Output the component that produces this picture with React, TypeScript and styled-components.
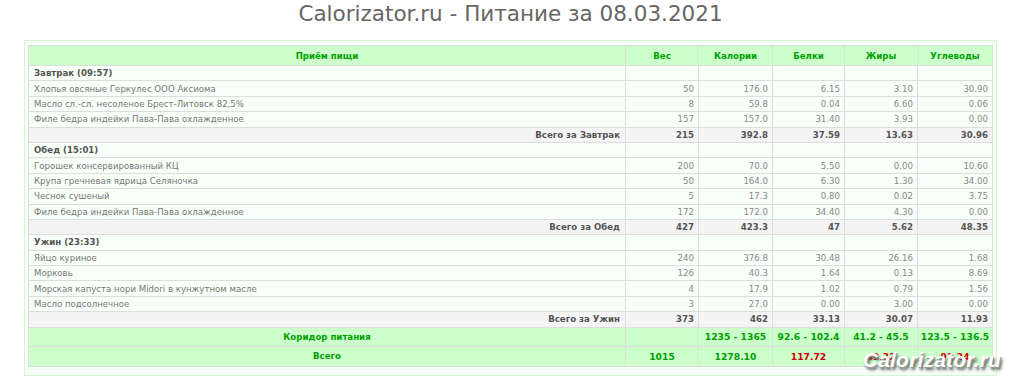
import React from "react";
import styled, { createGlobalStyle } from "styled-components";

const GlobalStyle = createGlobalStyle`
  html, body {
    margin: 0;
    padding: 0;
    background: #ffffff;
  }
`;

const Page = styled.div`
  position: relative;
  width: 973px;
  margin-left: 24px;
  font-family: "DejaVu Sans", Verdana, sans-serif;
`;

const Title = styled.h1`
  margin: 0;
  height: 40px;
  padding-top: 1px;
  box-sizing: border-box;
  text-align: center;
  font-family: "DejaVu Sans", Verdana, sans-serif;
  font-weight: normal;
  font-size: 21.5px;
  line-height: 26px;
  color: #666666;
`;

const Frame = styled.div`
  background: #f6fff6;
  border: 1px solid #d4f7d4;
  padding: 4px 4px 8px 3px;
`;

const Table = styled.table`
  width: 964px;
  border-collapse: collapse;
  table-layout: fixed;
  font-size: 8.6px;
`;

const HeadCell = styled.th`
  height: 19px;
  padding: 0 4px;
  background: #ccffcc;
  border: 1px solid #dddddd;
  color: #00a000;
  font-weight: bold;
  text-align: center;
`;

type Kind = "meal" | "item" | "sum";

const Row = styled.tr<{ $kind: Kind }>`
  height: 15.4px;
  background: ${p => (p.$kind === "sum" ? "#f4f4f4" : "#f9fff9")};
`;

const NameCell = styled.td<{ $kind: Kind }>`
  padding: 0 5px;
  border: 1px solid #dddddd;
  color: ${p => (p.$kind === "item" ? "#777777" : "#555555")};
  font-weight: ${p => (p.$kind === "item" ? "normal" : "bold")};
  text-align: ${p => (p.$kind === "sum" ? "right" : "left")};
  white-space: nowrap;
`;

const NumCell = styled.td<{ $bold?: boolean }>`
  padding: 0 4px;
  border: 1px solid #dddddd;
  text-align: right;
  color: ${p => (p.$bold ? "#555555" : "#888888")};
  font-weight: ${p => (p.$bold ? "bold" : "normal")};
`;

const GreenRow = styled.tr<{ $h: number }>`
  height: ${p => p.$h}px;
  background: #ccffcc;
`;

const GreenCell = styled.td<{ $bad?: boolean; $big?: boolean }>`
  padding: 0 2px;
  border: 1px solid #dddddd;
  text-align: center;
  font-weight: bold;
  font-size: ${p => (p.$big ? "9.2px" : "8.6px")};
  color: ${p => (p.$bad ? "#d00000" : "#00a000")};
  white-space: nowrap;
`;

const Watermark = styled.div`
  position: absolute;
  right: -4px;
  bottom: 4px;
  font-family: "Liberation Sans", Arial, sans-serif;
  font-style: italic;
  font-weight: bold;
  font-size: 21px;
  color: #ffffff;
  text-shadow: 1px 1px 0 #999999, 2px 3px 3px #555555;
  letter-spacing: 0.2px;
  pointer-events: none;
`;

type Item = { name: string; v: string[] };
type Meal = { title: string; items: Item[]; total: string; sum: string[] };

const meals: Meal[] = [
  {
    title: "Завтрак (09:57)",
    total: "Всего за Завтрак",
    items: [
      { name: "Хлопья овсяные Геркулес ООО Аксиома", v: ["50", "176.0", "6.15", "3.10", "30.90"] },
      { name: "Масло сл.-сл. несоленое Брест-Литовск 82,5%", v: ["8", "59.8", "0.04", "6.60", "0.06"] },
      { name: "Филе бедра индейки Пава-Пава охлажденное", v: ["157", "157.0", "31.40", "3.93", "0.00"] },
    ],
    sum: ["215", "392.8", "37.59", "13.63", "30.96"],
  },
  {
    title: "Обед (15:01)",
    total: "Всего за Обед",
    items: [
      { name: "Горошек консервированный КЦ", v: ["200", "70.0", "5.50", "0.00", "10.60"] },
      { name: "Крупа гречневая ядрица Селяночка", v: ["50", "164.0", "6.30", "1.30", "34.00"] },
      { name: "Чеснок сушеный", v: ["5", "17.3", "0.80", "0.02", "3.75"] },
      { name: "Филе бедра индейки Пава-Пава охлажденное", v: ["172", "172.0", "34.40", "4.30", "0.00"] },
    ],
    sum: ["427", "423.3", "47", "5.62", "48.35"],
  },
  {
    title: "Ужин (23:33)",
    total: "Всего за Ужин",
    items: [
      { name: "Яйцо куриное", v: ["240", "376.8", "30.48", "26.16", "1.68"] },
      { name: "Морковь", v: ["126", "40.3", "1.64", "0.13", "8.69"] },
      { name: "Морская капуста нори Midori в кунжутном масле", v: ["4", "17.9", "1.02", "0.79", "1.56"] },
      { name: "Масло подсолнечное", v: ["3", "27.0", "0.00", "3.00", "0.00"] },
    ],
    sum: ["373", "462", "33.13", "30.07", "11.93"],
  },
];

const columns = ["Вес", "Калории", "Белки", "Жиры", "Углеводы"];
const widths = [597, 73, 74, 72, 73, 75];

const MealBlock: React.FC<{ meal: Meal }> = ({ meal }) => (
  <>
    <Row $kind="meal">
      <NameCell $kind="meal">{meal.title}</NameCell>
      {columns.map(c => (
        <NumCell key={c} />
      ))}
    </Row>
    {meal.items.map(item => (
      <Row $kind="item" key={item.name}>
        <NameCell $kind="item">{item.name}</NameCell>
        {item.v.map((n, i) => (
          <NumCell key={i}>{n}</NumCell>
        ))}
      </Row>
    ))}
    <Row $kind="sum">
      <NameCell $kind="sum">{meal.total}</NameCell>
      {meal.sum.map((n, i) => (
        <NumCell $bold key={i}>
          {n}
        </NumCell>
      ))}
    </Row>
  </>
);

export default function App() {
  return (
    <Page>
      <GlobalStyle />
      <Title>Calorizator.ru - Питание за 08.03.2021</Title>
      <Frame>
        <Table>
          <colgroup>
            {widths.map((w, i) => (
              <col key={i} style={{ width: w }} />
            ))}
          </colgroup>
          <thead>
            <tr>
              <HeadCell>Приём пищи</HeadCell>
              {columns.map(c => (
                <HeadCell key={c}>{c}</HeadCell>
              ))}
            </tr>
          </thead>
          <tbody>
            {meals.map(m => (
              <MealBlock meal={m} key={m.title} />
            ))}
            <GreenRow $h={19}>
              <GreenCell>Коридор питания</GreenCell>
              <GreenCell />
              <GreenCell $big>1235 - 1365</GreenCell>
              <GreenCell $big>92.6 - 102.4</GreenCell>
              <GreenCell $big>41.2 - 45.5</GreenCell>
              <GreenCell $big>123.5 - 136.5</GreenCell>
            </GreenRow>
            <GreenRow $h={20}>
              <GreenCell>Всего</GreenCell>
              <GreenCell $big>1015</GreenCell>
              <GreenCell $big>1278.10</GreenCell>
              <GreenCell $big $bad>117.72</GreenCell>
              <GreenCell $big $bad>49.32</GreenCell>
              <GreenCell $big $bad>91.24</GreenCell>
            </GreenRow>
          </tbody>
        </Table>
      </Frame>
      <Watermark>Calorizator.ru</Watermark>
    </Page>
  );
}
